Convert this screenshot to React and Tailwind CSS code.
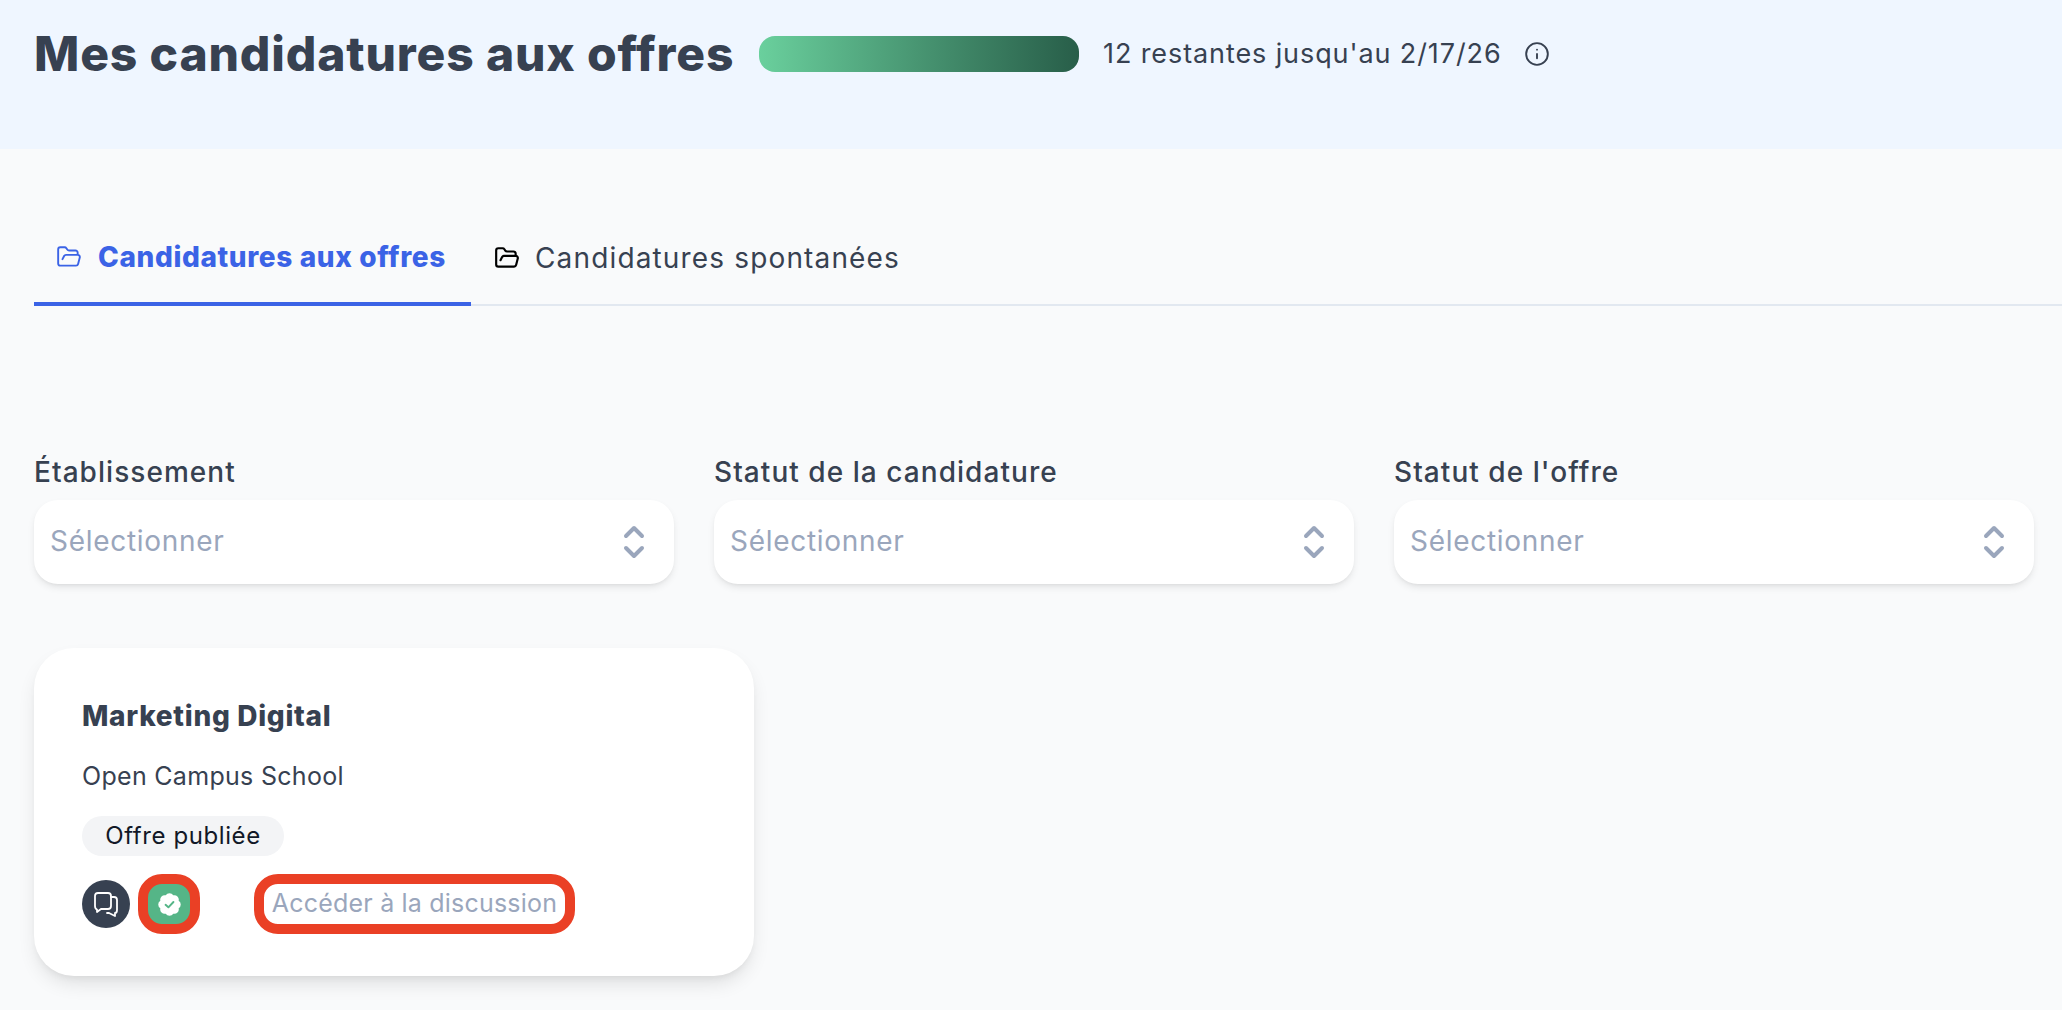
import React from "react";
import { FolderOpen, Info } from "lucide-react";

const font = "font-['Inter','Noto_Sans',sans-serif]";

const Chevrons = () => (
  <svg width="24" height="36" viewBox="0 0 24 36" fill="none" stroke="#9aa6bc" strokeWidth="4" strokeLinecap="round" strokeLinejoin="round">
    <path d="M4 12 L12 4 L20 12" />
    <path d="M4 24 L12 32 L20 24" />
  </svg>
);

const FilterSelect = ({ label }) => (
  <div className="w-[640px]">
    <label className="block h-[44px] text-[28px] leading-[32px] font-medium text-[#374151] tracking-[1.05px]">{label}</label>
    <div className="h-[84px] rounded-[24px] bg-white shadow-[0_4px_8px_-2px_rgba(0,0,0,0.12),0_2px_4px_-2px_rgba(0,0,0,0.06)] pl-[16px] pr-[28px] flex items-center justify-between">
      <span className="pb-[2px] text-[28px] text-[#9aa6bc] tracking-[0.7px]">Sélectionner</span>
      <Chevrons />
    </div>
  </div>
);

const ChatIcon = () => (
  <svg width="28" height="28" viewBox="0 0 28 28" fill="none" stroke="white" strokeWidth="1.800" strokeLinecap="round" strokeLinejoin="round">
    <path d="M6 3 H16 C18 3 19 4 19 6 V16 C19 18 18 19 16 19 H9 L5 22 V19.5 C3.500 19 3 18 3 16 V6 C3 4 4 3 6 3 Z" />
    <path d="M19 7 H22 C24 7 25 8 25 10 V20 C25 22 24 23 23 23 V26 L17 23 H15" />
  </svg>
);

const VerifiedIcon = () => (
  <svg width="27" height="27" viewBox="0 0 24 24">
    <path fill="white" d="M3.850 8.620a4 4 0 0 1 4.780-4.770 4 4 0 0 1 6.740 0 4 4 0 0 1 4.780 4.780 4 4 0 0 1 0 6.740 4 4 0 0 1-4.770 4.780 4 4 0 0 1-6.750 0 4 4 0 0 1-4.780-4.770 4 4 0 0 1 0-6.760Z" />
    <path fill="none" stroke="#55b587" strokeWidth="1.700" strokeLinecap="round" strokeLinejoin="round" d="M8.500 12.300 L11 14.500 L15.500 9.800" />
  </svg>
);

export default function App() {
  return (
    <div className={`min-h-[1010px] bg-[#f9fafb] ${font}`}>
      {/* Header */}
      <header className="h-[149px] bg-[#eff6ff] pl-[34px] pt-[18px]">
        <div className="flex items-center h-[72px]">
          <h1 className="w-[725px] text-[48px] leading-[72px] font-extrabold text-[#374151] tracking-[0.85px] whitespace-nowrap">Mes candidatures aux offres</h1>
          <div className="w-[320px] h-[36px] rounded-[16px] bg-linear-to-r from-[#6ad09d] to-[#285e49]" />
          <span className="ml-[24px] w-[421px] text-[27px] text-[#374151] tracking-[0.9px] whitespace-nowrap">12 restantes jusqu'au 2/17/26</span>
          <Info size={26} strokeWidth={1.75} className="text-[#374151]" />
        </div>
      </header>

      {/* Tabs */}
      <nav className="mt-[69px] ml-[34px] h-[88px] flex border-b-2 border-[#e2e8f0]">
        <div className="w-[437px] h-[88px] pl-[22px] pb-[6px] flex items-center gap-[16px] border-b-4 border-[#3b63e6] text-[#3b63e6]">
          <FolderOpen size={26} strokeWidth={1.75} className="shrink-0" />
          <span className="text-[28px] font-extrabold tracking-[0.62px] whitespace-nowrap">Candidatures aux offres</span>
        </div>
        <div className="pl-[23px] h-[84px] pb-[4px] flex items-center gap-[15px]">
          <FolderOpen size={26} strokeWidth={2} className="text-black shrink-0" />
          <span className="text-[28px] text-[#374151] tracking-[1.15px] whitespace-nowrap">Candidatures spontanées</span>
        </div>
      </nav>

      {/* Filters */}
      <section className="mt-[150px] ml-[34px] flex gap-[40px]">
        <FilterSelect label="Établissement" />
        <FilterSelect label="Statut de la candidature" />
        <FilterSelect label="Statut de l'offre" />
      </section>

      {/* Card */}
      <article className="mt-[64px] ml-[34px] w-[720px] h-[328px] rounded-[40px] bg-white shadow-[0_10px_20px_-4px_rgba(0,0,0,0.12),0_4px_8px_-4px_rgba(0,0,0,0.08)] pl-[48px] pt-[48px]">
        <h2 className="text-[28px] leading-[40px] font-extrabold text-[#374151] tracking-[0.7px]">Marketing Digital</h2>
        <p className="mt-[22px] text-[25px] leading-[36px] text-[#374151] tracking-[0.3px]">Open Campus School</p>
        <span className="mt-[22px] h-[40px] w-[202px] rounded-full bg-[#f3f4f6] flex items-center justify-center text-[24px] text-[#111827] tracking-[0.6px]">Offre publiée</span>
        <div className="mt-[18px] flex items-center">
          <div className="w-[48px] h-[48px] rounded-full bg-[#374151] flex items-center justify-center"><ChatIcon /></div>
          <div className="ml-[8px] w-[62px] h-[60px] rounded-[24px] border-[10px] border-[#ea4025] bg-[#55b587] flex items-center justify-center"><VerifiedIcon /></div>
          <a className="ml-[54px] w-[321px] h-[60px] rounded-[24px] border-[10px] border-[#ea4025] bg-white flex items-center justify-center text-[25px] text-[#9aa6bc] tracking-[0.2px] whitespace-nowrap">Accéder à la discussion</a>
        </div>
      </article>
    </div>
  );
}
